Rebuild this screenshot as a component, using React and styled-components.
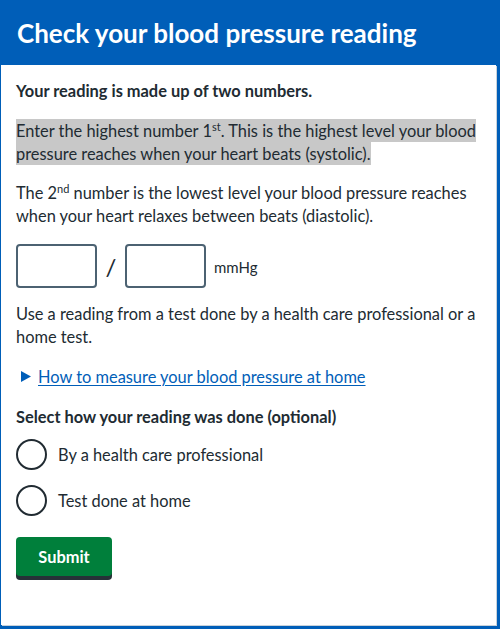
import React from "react";
import styled, { createGlobalStyle } from "styled-components";

const Global = createGlobalStyle`
  html, body { margin: 0; padding: 0; }
  body {
    background: #005eb8;
    font-family: Lato, "Noto Sans", Arial, sans-serif;
    color: #212b32;
  }
`;

const Frame = styled.div`
  width: 500px;
  height: 629px;
  display: flex;
  flex-direction: column;
  background: #005eb8;
`;

const Header = styled.header`
  height: 65px;
  display: flex;
  align-items: center;
  padding: 0 17px;
  box-sizing: border-box;
  flex-shrink: 0;
`;

const Title = styled.h1`
  margin: 0;
  color: #fff;
  font-size: 26px;
  font-weight: 700;
`;

const Panel = styled.main`
  flex: 1;
  margin: 0 4px 4px 1px;
  background: #fff;
  box-shadow: 1px 1px 0 #c9d2da;
  padding: 14px 16px 0 15px;
`;

const P = styled.p`
  margin: 0 0 ${(p) => p.$mb ?? 17}px;
  font-size: 16.4px;
  line-height: 23px;
  font-weight: ${(p) => (p.$bold ? 700 : 400)};
`;

const Highlight = styled.span`
  background: #c8c8c8;
  padding: 2px 0;
`;

const Sup = styled.span`
  font-size: 11px;
  line-height: 0;
  position: relative;
  top: -6px;
`;

const InputRow = styled.div`
  display: flex;
  align-items: center;
  margin: 0 0 14px;
`;

const Box = styled.div`
  width: 81px;
  height: 44px;
  box-sizing: border-box;
  border: 2px solid #4c6272;
  border-radius: 4px;
`;

const Slash = styled.span`
  width: 28px;
  text-align: center;
  font-size: 24px;
  color: #212b32;
`;

const Unit = styled.span`
  margin-left: 8px;
  font-size: 15px;
  padding-top: 2px;
`;

const LinkRow = styled.div`
  display: flex;
  align-items: center;
  gap: 7px;
  margin: 0 0 17px 5px;
  font-size: 16.4px;
  line-height: 23px;
`;

const Tri = styled.svg`
  width: 10px;
  height: 11px;
  flex-shrink: 0;
`;

const Link = styled.a`
  color: #005eb8;
  text-decoration: underline;
  text-underline-offset: 2px;
`;

const Radio = styled.label`
  display: flex;
  align-items: center;
  gap: 11px;
  height: 31px;
  margin-bottom: 15px;
  font-size: 16.4px;
`;

const Circle = styled.span`
  width: 31px;
  height: 31px;
  box-sizing: border-box;
  border: 2px solid #212b32;
  border-radius: 50%;
  flex-shrink: 0;
`;

const Button = styled.button`
  margin-top: 6px;
  width: 96px;
  height: 39px;
  background: #007f3b;
  color: #fff;
  border: 0;
  border-radius: 4px;
  box-shadow: 0 4px 0 #263238;
  font-family: inherit;
  font-size: 16.4px;
  font-weight: 700;
`;

export default function App() {
  return (
    <>
      <Global />
      <Frame>
        <Header>
          <Title>Check your blood pressure reading</Title>
        </Header>
        <Panel>
          <P $bold>Your reading is made up of two numbers.</P>
          <P $mb={16}>
            <Highlight>
              Enter the highest number 1<Sup>st</Sup>. This is the highest level your blood pressure reaches when your heart beats (systolic).
            </Highlight>
          </P>
          <P>
            The 2<Sup>nd</Sup> number is the lowest level your blood pressure reaches when your heart relaxes between beats (diastolic).
          </P>
          <InputRow>
            <Box />
            <Slash>/</Slash>
            <Box />
            <Unit>mmHg</Unit>
          </InputRow>
          <P>Use a reading from a test done by a health care professional or a home test.</P>
          <LinkRow>
            <Tri viewBox="0 0 10 11">
              <polygon points="0,0 10,5.5 0,11" fill="#005eb8" />
            </Tri>
            <Link href="#">How to measure your blood pressure at home</Link>
          </LinkRow>
          <P $bold $mb={11}>Select how your reading was done (optional)</P>
          <Radio>
            <Circle />
            By a health care professional
          </Radio>
          <Radio>
            <Circle />
            Test done at home
          </Radio>
          <Button>Submit</Button>
        </Panel>
      </Frame>
    </>
  );
}
